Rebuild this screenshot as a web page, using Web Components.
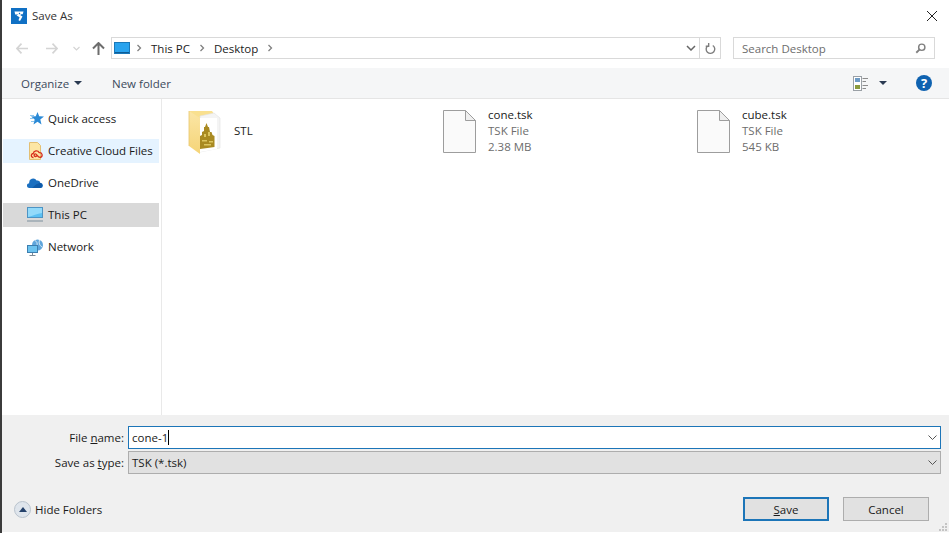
<!DOCTYPE html>
<html lang="en">
<head>
<meta charset="utf-8">
<title>Save As</title>
<style>
  html, body { margin: 0; padding: 0; height: 100%; background: #fff; overflow: hidden; }
  body { font: 12px "Open Sans", "Noto Sans", sans-serif; color: #1a1a1a; }
</style>
</head>
<body>
<save-dialog>
  <title-bar slot="title" label="Save As"></title-bar>
  <nav-bar slot="nav"></nav-bar>
  <tool-bar slot="tools"></tool-bar>
  <side-nav slot="side">
    <nav-item icon="star">Quick access</nav-item>
    <nav-item icon="cloudfiles" state="hover">Creative Cloud Files</nav-item>
    <nav-item icon="onedrive">OneDrive</nav-item>
    <nav-item icon="pc" state="selected">This PC</nav-item>
    <nav-item icon="network">Network</nav-item>
  </side-nav>
  <file-list slot="files">
    <file-item kind="folder" name="STL"></file-item>
    <file-item kind="file" name="cone.tsk" type="TSK File" size="2.38 MB"></file-item>
    <file-item kind="file" name="cube.tsk" type="TSK File" size="545 KB"></file-item>
  </file-list>
  <save-form slot="form"></save-form>
</save-dialog>

<script>
// SHARED ICON MARKUP
const ICONS = {
  star: `<svg width="18" height="16" viewBox="0 0 18 16"><path d="M10.500 1l1.700 4.300 4.800.3-3.700 3 1.200 4.900-4-2.700-4 2.700 1.200-4.900-3.700-3 4.800-.3z" fill="#2b8ad6"/><path d="M3 4.500h4M3 7.500h3M4 10.500h3" stroke="#8cc6ee" stroke-width="1.200"/></svg>`,
  cloudfiles: `<svg width="18" height="18" viewBox="0 0 18 18"><path d="M2.500.5h8l3 3v14h-11z" fill="#fde6a4" stroke="#e3bf73"/><path d="M6.500 15.500a2 2 0 0 1-.3-4 3.200 3.200 0 0 1 6-.9 2.500 2.500 0 0 1 1.300 4.800c-1.700.3-2.600-1-3.300-2.100-.7-1-1.500-1.800-2.500-1.200-1 .6-.6 2.300.6 2.400 1 .1 1.700-.6 2.200-1.300" fill="none" stroke="#d8301d" stroke-width="1.300"/></svg>`,
  onedrive: `<svg width="18" height="12" viewBox="0 0 18 12"><path d="M2.500 11a2.400 2.400 0 0 1-.3-4.800 4 4 0 0 1 7.400-2.600 3 3 0 0 1 3.800 2.300 2.600 2.600 0 0 1 .6 5.100z" fill="#1a6fc0"/><path d="M5 11l4-3.600 3.500-1.500 1.400.2a2.600 2.600 0 0 1-.9 4.900z" fill="#0f5aa8"/></svg>`,
  pc: `<svg width="18" height="16" viewBox="0 0 18 16"><rect x=".5" y=".5" width="15" height="10" fill="#5cc0f2" stroke="#4d94c4"/><path d="M1 1h14v5C10 7 6 8.500 1 10z" fill="#93dafa"/><path d="M0 14h16" stroke="#9aa7b1" stroke-width="1.500"/></svg>`,
  network: `<svg width="18" height="17" viewBox="0 0 18 17"><circle cx="10.500" cy="6" r="5.500" fill="#5fa6dc"/><path d="M8 1.500c2 1 2.500 3 2 5M12.500 1c-1 3 0 5.500 2.500 7" stroke="#d3e8f6" fill="none"/><rect x=".5" y="6.500" width="10" height="7" fill="#6cc3ef" stroke="#3d7fb0"/><path d="M5.500 14v2M2.500 16.500h6" stroke="#7d8b96"/></svg>`,
  folder: `<svg width="34" height="46" viewBox="0 0 34 46">
    <defs>
      <linearGradient id="front" x1="0" y1="0" x2="0" y2="1"><stop offset="0" stop-color="#fbe6a6"/><stop offset="1" stop-color="#f5d477"/></linearGradient>
    </defs>
    <path d="M1 3h23l2 3v32H1z" fill="#f9e08f"/>
    <path d="M12 8l14-3 6 5v30l-20 4z" fill="#f4f4f4" stroke="#e0e0e0" stroke-width=".6"/>
    <path d="M12 10h17v31l-17 3z" fill="#fff"/>
    <path d="M12 41V28l2-1v-3l2-1v-4h1l1.500-4 1.500 4h1l1 5h1.500l1 3 2 1v11l-7 1z" fill="#a98a22"/>
    <path d="M16 26h2v3h-2zM20 24h2v4h-2zM14 32h5v1.500h-5zM21 33h4v1.500h-4zM16 36h7v1.500h-7z" fill="#dcc560"/>
    <path d="M1 3l11 7v36L1 38z" fill="url(#front)"/>
    <path d="M1 3v35" stroke="#e8c56a" stroke-width=".8"/>
  </svg>`,
  file: `<svg width="33" height="43" viewBox="0 0 33 43"><path d="M.5.5h22l10 10v32H.5z" fill="#fafafa" stroke="#9d9d9d"/><path d="M22.500.5v10h10z" fill="#efefef" stroke="#9d9d9d"/></svg>`
};

// SAVE DIALOG SHELL
class SaveDialog extends HTMLElement {
  constructor() {
    super();
    this.attachShadow({ mode: 'open' });
    this.shadowRoot.innerHTML = `
      <style>
        :host { display: flex; flex-direction: column; width: 949px; height: 533px; box-sizing: border-box;
                border-left: 2px solid #3b3b3b; padding-bottom: 1px; background: #fff; }
        .main { flex: 1; display: flex; min-height: 0; }
      </style>
      <slot name="title"></slot>
      <slot name="nav"></slot>
      <slot name="tools"></slot>
      <div class="main">
        <slot name="side"></slot>
        <slot name="files"></slot>
      </div>
      <slot name="form"></slot>
    `;
  }
}

class TitleBar extends HTMLElement {
  constructor() {
    super();
    this.attachShadow({ mode: 'open' });
    this.shadowRoot.innerHTML = `
      <style>
        :host { display: flex; align-items: center; height: 32px; padding: 0 12px 1px 9px; box-sizing: border-box; font-size: 11.500px; color: #333; }
        .logo { width: 16px; height: 16px; background: #1070c4; display: flex; align-items: center; justify-content: center; margin-right: 5px; }
        .label { flex: 1; }
      </style>
      <span class="logo"><svg width="12" height="12" viewBox="0 0 12 12"><path fill-rule="evenodd" d="M1.500 1.500h9l-.8 2.800H7.800l-.3 1 2 1.200L7 11 5.500 10.300l1.100-3L3.500 5.500l2-1H2.200zM6.500 2.700a.7.7 0 1 0 .01 0z" fill="#fff"/></svg></span>
      <span class="label">${this.getAttribute('label')}</span>
      <svg width="10" height="10" viewBox="0 0 10 10"><path d="M0 0l10 10M10 0L0 10" stroke="#222" stroke-width="1"/></svg>
    `;
  }
}

class NavBar extends HTMLElement {
  constructor() {
    super();
    const sep = `<svg class="sep" viewBox="0 0 6 8"><path d="M1.500 1l3 3-3 3" fill="none" stroke="#808080" stroke-width="1.300"/></svg>`;
    this.attachShadow({ mode: 'open' });
    this.shadowRoot.innerHTML = `
      <style>
        :host { display: flex; align-items: center; height: 36px; box-sizing: border-box; padding: 0 8px 4px 14px; font-size: 11.500px; color: #222; }
        .arrows { display: flex; align-items: center; width: 95px; }
        .address { display: flex; align-items: center; width: 610px; height: 22px; box-sizing: border-box; border: 1px solid #d9d9d9; padding-left: 2px; }
        .crumbs { flex: 1; display: flex; align-items: center; gap: 9px; }
        .pc-ic { margin-right: -3px; }
        .sep { width: 6px; height: 8px; }
        .drop { width: 16px; display: flex; justify-content: center; }
        .refresh { width: 20px; height: 20px; border-left: 1px solid #d9d9d9; display: flex; align-items: center; justify-content: center; }
        .search { display: flex; align-items: center; justify-content: space-between; width: 202px; height: 22px; box-sizing: border-box; border: 1px solid #d9d9d9;
                  margin-left: 12px; padding: 0 8px 0 8px; color: #6d6d6d; }
      </style>
      <div class="arrows">
        <svg width="12" height="11" viewBox="0 0 12 11" style="margin-right:18px"><path d="M5.500 .7L.9 5.500l4.600 4.800M1 5.500h11" fill="none" stroke="#d4d4d4" stroke-width="1.700"/></svg>
        <svg width="12" height="11" viewBox="0 0 12 11" style="margin-right:15px"><path d="M6.500 .7l4.600 4.800-4.600 4.800M11 5.500H0" fill="none" stroke="#d4d4d4" stroke-width="1.700"/></svg>
        <svg width="7" height="5" viewBox="0 0 7 5" style="margin-right:12px"><path d="M.5 1l3 3 3-3" fill="none" stroke="#d4d4d4" stroke-width="1.200"/></svg>
        <svg width="13" height="13" viewBox="0 0 13 13"><path d="M1 6.500l5.500-5.500 5.500 5.500M6.500 1.500V13" fill="none" stroke="#6d6d6d" stroke-width="2"/></svg>
      </div>
      <div class="address">
        <div class="crumbs">
          <svg class="pc-ic" width="16" height="12" viewBox="0 0 16 12"><rect x=".5" y=".5" width="15" height="11" fill="#29a3ee" stroke="#1a78b8"/><path d="M1 10.500h14" stroke="#0d5c96"/></svg>
          ${sep}
          <span>This PC</span>
          ${sep}
          <span>Desktop</span>
          ${sep}
        </div>
        <span class="drop"><svg width="10" height="6" viewBox="0 0 10 6"><path d="M1 1l4 4 4-4" fill="none" stroke="#666" stroke-width="1.500"/></svg></span>
        <span class="refresh"><svg width="11" height="13" viewBox="0 0 12 13"><path d="M3 3.500a4.700 4.700 0 1 0 5.500-.3M4 .5v3.500H.8" fill="none" stroke="#7d7d7d" stroke-width="1.500"/></svg></span>
      </div>
      <div class="search">
        <span>Search Desktop</span>
        <svg width="11" height="11" viewBox="0 0 13 13"><circle cx="8" cy="5" r="3.700" fill="none" stroke="#808080" stroke-width="1.700"/><path d="M5.500 7.500L1.500 11.500" stroke="#808080" stroke-width="2.200"/></svg>
      </div>
    `;
  }
}

class ToolBar extends HTMLElement {
  constructor() {
    super();
    this.attachShadow({ mode: 'open' });
    this.shadowRoot.innerHTML = `
      <style>
        :host { display: flex; align-items: center; height: 31px; box-sizing: border-box; background: #f5f6f7; border-bottom: 1px solid #e5e5e5;
                padding: 0 17px 0 19px; font-size: 11.500px; color: #3c4a5c; }
        .org { display: flex; align-items: center; gap: 5px; width: 91px; }
        .grow { flex: 1; }
        .views { display: flex; align-items: center; gap: 11px; margin-right: 29px; }
        .help { width: 16px; height: 16px; border-radius: 50%; background: #0f62b0; color: #fff; font-weight: 700; font-size: 13px; line-height: 16px; text-align: center; }
      </style>
      <div class="org"><span>Organize</span><svg width="8" height="4" viewBox="0 0 8 4"><path d="M0 0h8L4 4z" fill="#2a3a52"/></svg></div>
      <span>New folder</span>
      <span class="grow"></span>
      <div class="views">
        <svg width="15" height="15" viewBox="0 0 15 15"><rect x=".5" y=".5" width="8" height="14" fill="#fff" stroke="#9aa0a6"/><rect x="2" y="2" width="5" height="4" fill="#6e9bc5"/><rect x="2" y="9" width="5" height="4" fill="#8a9a3c"/><path d="M9.500 2.500h5.500M9.500 5.500h3.500M9.500 9.500h5.500M9.500 12.500h3.500" stroke="#8c8c8c"/></svg>
        <svg width="8" height="4" viewBox="0 0 8 4"><path d="M0 0h8L4 4z" fill="#2a3a52"/></svg>
      </div>
      <span class="help">?</span>
    `;
  }
}

class SideNav extends HTMLElement {
  constructor() {
    super();
    this.attachShadow({ mode: 'open' });
    this.shadowRoot.innerHTML = `
      <style>
        :host { display: flex; flex-direction: column; gap: 8px; width: 160px; box-sizing: border-box; padding: 8px 2px 0 1px; border-right: 1px solid #e9e9e9; flex: none; }
      </style>
      <slot></slot>
    `;
  }
}

class NavItem extends HTMLElement {
  constructor() {
    super();
    const bg = { hover: '#e5f3ff', selected: '#d9d9d9' }[this.getAttribute('state')] || 'transparent';
    this.attachShadow({ mode: 'open' });
    this.shadowRoot.innerHTML = `
      <style>
        :host { display: flex; align-items: center; height: 24px; background: ${bg}; font-size: 11.500px; color: #1a1a1a; }
        .ic { width: 18px; margin-left: 24px; margin-right: 3px; display: flex; }
        .txt { margin-bottom: 2px; }
      </style>
      <span class="ic">${ICONS[this.getAttribute('icon')]}</span>
      <span class="txt"><slot></slot></span>
    `;
  }
}

class FileList extends HTMLElement {
  constructor() {
    super();
    this.attachShadow({ mode: 'open' });
    this.shadowRoot.innerHTML = `
      <style>
        :host { flex: 1; display: grid; grid-template-columns: repeat(3, 254px); grid-auto-rows: 48px; padding: 8px 0 0 26px; box-sizing: border-box; }
      </style>
      <slot></slot>
    `;
  }
}

class FileItem extends HTMLElement {
  constructor() {
    super();
    const folder = this.getAttribute('kind') === 'folder';
    const details = folder ? '' : `
      <div class="sub">${this.getAttribute('type')}</div>
      <div class="sub">${this.getAttribute('size')}</div>`;
    this.attachShadow({ mode: 'open' });
    this.shadowRoot.innerHTML = `
      <style>
        :host { display: flex; align-items: center; gap: 12px; font-size: 11.500px; line-height: 16px; color: #1a1a1a; }
        .ic { display: flex; width: ${folder ? 34 : 33}px; margin-left: ${folder ? 0 : 1}px; }
        .sub { color: #6d6d6d; }
      </style>
      <span class="ic">${ICONS[folder ? 'folder' : 'file']}</span>
      <div><div>${this.getAttribute('name')}</div>${details}</div>
    `;
  }
}

class SaveForm extends HTMLElement {
  constructor() {
    super();
    const chev = `<svg width="9" height="5" viewBox="0 0 9 5"><path d="M.5.5l4 4 4-4" fill="none" stroke="#555" stroke-width="1"/></svg>`;
    this.attachShadow({ mode: 'open' });
    this.shadowRoot.innerHTML = `
      <style>
        :host { display: flex; flex-direction: column; height: 117px; box-sizing: border-box; background: #f0f0f0; padding: 11px 0 0 0; font-size: 11.500px; color: #1a1a1a; position: relative; }
        .row { display: flex; align-items: center; height: 23px; margin-bottom: 2px; }
        .lab { width: 122px; text-align: right; margin-right: 4px; }
        .field { width: 813px; height: 23px; box-sizing: border-box; display: flex; align-items: center; justify-content: space-between; padding: 0 3px 0 3px; }
        .name { background: #fff; border: 1px solid #1c75b8; }
        .type { background: #e1e1e1; border: 1px solid #adadad; }
        .caret { display: inline-block; width: 1px; height: 15px; background: #000; vertical-align: -3px; }
        .foot { display: flex; align-items: center; margin-top: 21px; padding: 0 20px 0 12px; }
        .hide { display: flex; align-items: center; gap: 4px; flex: 1; }
        .circle { width: 17px; height: 17px; box-sizing: border-box; border-radius: 50%; border: 1px solid #b9c3cd; background: #dfe5ec; display: flex; align-items: center; justify-content: center; }
        .btns { display: flex; gap: 14px; }
        u { text-underline-offset: 1px; }
        .grip { position: absolute; right: 1px; bottom: 0; }
      </style>
      <div class="row">
        <span class="lab">File <u>n</u>ame:</span>
        <div class="field name"><span>cone-1<span class="caret"></span></span>${chev}</div>
      </div>
      <div class="row">
        <span class="lab">Save as <u>t</u>ype:</span>
        <div class="field type"><span>TSK (*.tsk)</span>${chev}</div>
      </div>
      <div class="foot">
        <div class="hide">
          <span class="circle"><svg width="8" height="5" viewBox="0 0 8 5"><path d="M4 0l4 5H0z" fill="#25426b"/></svg></span>
          <span>Hide Folders</span>
        </div>
        <div class="btns">
          <dlg-button primary><u>S</u>ave</dlg-button>
          <dlg-button>Cancel</dlg-button>
        </div>
      </div>
      <svg class="grip" width="9" height="9" viewBox="0 0 9 9"><path d="M6 0h2v2H6zM3 3h2v2H3zM6 3h2v2H6zM0 6h2v2H0zM3 6h2v2H3zM6 6h2v2H6z" fill="#c4c4c4"/></svg>
    `;
  }
}

class DlgButton extends HTMLElement {
  constructor() {
    super();
    const primary = this.hasAttribute('primary');
    this.attachShadow({ mode: 'open' });
    this.shadowRoot.innerHTML = `
      <style>
        :host { display: flex; align-items: center; justify-content: center; width: 86px; height: 24px; box-sizing: border-box; background: #e1e1e1;
                border: ${primary ? '2px solid #1c75b8' : '1px solid #adadad'}; color: #1a1a1a; font-size: 11.500px; }
        ::slotted(u) { text-underline-offset: 1px; }
      </style>
      <slot></slot>
    `;
  }
}

// REGISTER THE CUSTOM ELEMENTS
customElements.define('save-dialog', SaveDialog);
customElements.define('title-bar', TitleBar);
customElements.define('nav-bar', NavBar);
customElements.define('tool-bar', ToolBar);
customElements.define('side-nav', SideNav);
customElements.define('nav-item', NavItem);
customElements.define('file-list', FileList);
customElements.define('file-item', FileItem);
customElements.define('save-form', SaveForm);
customElements.define('dlg-button', DlgButton);
</script>
</body>
</html>
